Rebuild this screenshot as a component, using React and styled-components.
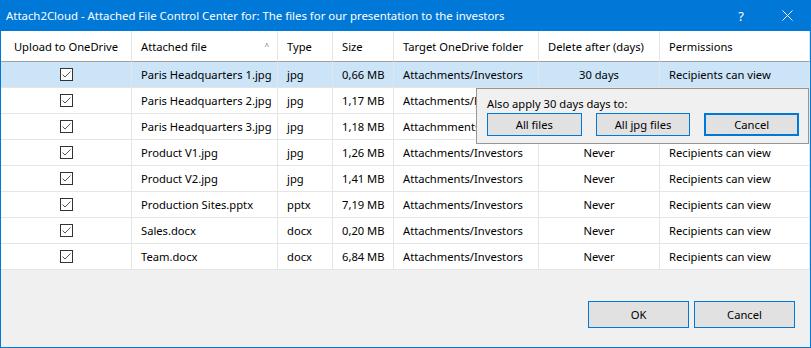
import styled, { createGlobalStyle } from "styled-components";

const GlobalStyle = createGlobalStyle`
  html, body { margin: 0; padding: 0; background: #ffffff; }
  body { font-family: "Noto Sans", "Open Sans", sans-serif; font-size: 11.2px; color: #000; }
  * { box-sizing: border-box; }
`;

const columns = [
  { key: "upload", label: "Upload to OneDrive", width: "131px", center: true },
  { key: "file", label: "Attached file", width: "146px", sort: true },
  { key: "type", label: "Type", width: "55px" },
  { key: "size", label: "Size", width: "61px" },
  { key: "folder", label: "Target OneDrive folder", width: "145px" },
  { key: "del", label: "Delete after (days)", width: "121px" },
  { key: "perm", label: "Permissions", width: "1fr" },
];

const rows = [
  ["Paris Headquarters 1.jpg", "jpg", "0,66 MB", "Attachments/Investors", "30 days"],
  ["Paris Headquarters 2.jpg", "jpg", "1,17 MB", "Attachments/Pictures", "Never"],
  ["Paris Headquarters 3.jpg", "jpg", "1,18 MB", "Attachmments/Pictures", "Never"],
  ["Product V1.jpg", "jpg", "1,26 MB", "Attachments/Investors", "Never"],
  ["Product V2.jpg", "jpg", "1,41 MB", "Attachments/Investors", "Never"],
  ["Production Sites.pptx", "pptx", "7,19 MB", "Attachments/Investors", "Never"],
  ["Sales.docx", "docx", "0,20 MB", "Attachments/Investors", "Never"],
  ["Team.docx", "docx", "6,84 MB", "Attachments/Investors", "Never"],
];

function CheckBox() {
  return (
    <Box>
      <svg width="11" height="11" viewBox="0 0 11 11">
        <path d="M1.5 5.5 L4 8 L9.5 2.5" fill="none" stroke="#555" strokeWidth="1" />
      </svg>
    </Box>
  );
}

export default function App() {
  return (
    <>
      <GlobalStyle />
      <Window>
        <TitleBar>
          <Title>
            Attach2Cloud - Attached File Control Center for: The files for our presentation to the investors
          </Title>
          <Help>?</Help>
          <Close>
            <svg width="11" height="11" viewBox="0 0 11 11">
              <path d="M0.5 0.5 L10.5 10.5 M10.5 0.5 L0.5 10.5" stroke="#fff" strokeWidth="1" />
            </svg>
          </Close>
        </TitleBar>
        <TableArea>
          <Grid $cols={columns.map((c) => c.width).join(" ")}>
            {columns.map((c) => (
              <HeadCell key={c.key} $center={c.center}>
                {c.label}
                {c.sort && <SortMark>^</SortMark>}
              </HeadCell>
            ))}
            {rows.map((r, i) => (
              <Row key={r[0]} $selected={i === 0}>
                <Cell $center>
                  <CheckBox />
                </Cell>
                <Cell>{r[0]}</Cell>
                <Cell>{r[1]}</Cell>
                <Cell>{r[2]}</Cell>
                <Cell>{r[3]}</Cell>
                <Cell $center>{r[4]}</Cell>
                <Cell>Recipients can view</Cell>
              </Row>
            ))}
          </Grid>
          <Popup>
            <PopupText>Also apply 30 days days to:</PopupText>
            <PopupButtons>
              <SmallButton>All files</SmallButton>
              <SmallButton>All jpg files</SmallButton>
              <SmallButton $focused>Cancel</SmallButton>
            </PopupButtons>
          </Popup>
        </TableArea>
        <Footer>
          <DialogButton>OK</DialogButton>
          <DialogButton>Cancel</DialogButton>
        </Footer>
      </Window>
    </>
  );
}

const Window = styled.div`
  width: 811px;
  height: 348px;
  display: flex;
  flex-direction: column;
  border: 1px solid #0078d7;
  border-top: none;
  background: #f0f0f0;
`;

const TitleBar = styled.div`
  height: 31px;
  margin: 0 -1px;
  background: #0078d7;
  color: #fff;
  display: flex;
  align-items: center;
  padding-left: 6px;
`;

const Title = styled.div`
  flex: 1;
  font-size: 11.4px;
  white-space: nowrap;
`;

const Help = styled.div`
  width: 46px;
  text-align: center;
  font-size: 13px;
  margin-right: 0;
`;

const Close = styled.div`
  width: 46px;
  display: flex;
  justify-content: center;
  margin-right: 1px;
`;

const TableArea = styled.div`
  position: relative;
  background: #fff;
`;

const Grid = styled.div`
  display: grid;
  grid-template-columns: ${(p) => p.$cols};
`;

const HeadCell = styled.div`
  position: relative;
  height: 31px;
  display: flex;
  align-items: center;
  justify-content: ${(p) => (p.$center ? "center" : "flex-start")};
  padding: 0 ${(p) => (p.$center ? "0" : "9px")};
  border-right: 1px solid #e5e5e5;
  border-bottom: 1px solid #a0a0a0;
  white-space: nowrap;
`;

const SortMark = styled.span`
  position: absolute;
  right: 8px;
  top: 9px;
  font-size: 8px;
  color: #777;
`;

const Row = styled.div`
  display: contents;
  & > div {
    background: ${(p) => (p.$selected ? "#cce4f7" : "#fff")};
  }
`;

const Cell = styled.div`
  height: 26px;
  display: flex;
  align-items: center;
  justify-content: ${(p) => (p.$center ? "center" : "flex-start")};
  padding: 0 ${(p) => (p.$center ? "0" : "9px")};
  border-right: 1px solid #e5e5e5;
  border-bottom: 1px solid #e5e5e5;
  white-space: nowrap;
  overflow: hidden;
`;

const Box = styled.div`
  width: 13px;
  height: 13px;
  border: 1px solid #333;
  background: #fff;
  display: flex;
  align-items: center;
  justify-content: center;
`;

const Popup = styled.div`
  position: absolute;
  left: 475px;
  top: 57px;
  width: 333px;
  height: 56px;
  background: #f0f0f0;
  border: 1px solid #979797;
  padding: 4px 9px 0 10px;
`;

const PopupText = styled.div`
  height: 20px;
  display: flex;
  align-items: center;
`;

const PopupButtons = styled.div`
  display: flex;
  gap: 14px;
`;

const SmallButton = styled.div`
  width: 95px;
  height: 23px;
  display: flex;
  align-items: center;
  justify-content: center;
  background: #e1e1e1;
  border: ${(p) => (p.$focused ? "2px solid #0078d7" : "1px solid #0078d7")};
`;

const Footer = styled.div`
  flex: 1;
  display: flex;
  justify-content: flex-end;
  align-items: flex-start;
  gap: 5px;
  padding: 31px 15px 0 0;
  background: #f0f0f0;
`;

const DialogButton = styled.div`
  width: 101px;
  height: 27px;
  display: flex;
  align-items: center;
  justify-content: center;
  background: #e1e1e1;
  border: 1px solid #0078d7;
`;
